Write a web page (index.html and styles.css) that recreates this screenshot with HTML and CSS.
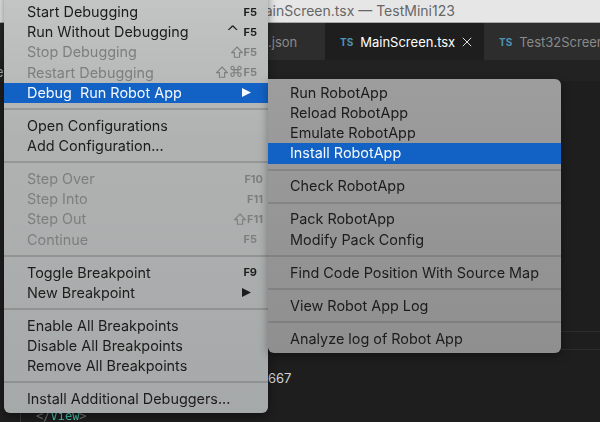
FILE: index.html
```html
<!DOCTYPE html>
<html lang="en">
<head>
<meta charset="utf-8">
<title>Debug menu</title>
<link rel="stylesheet" href="styles.css">
</head>
<body>
<svg class="defs" width="0" height="0"><symbol id="shift" viewBox="0 0 12 12"><path d="M6 1l5.3 5.6H8.6v4.6H3.4V6.6H.7z"/></symbol></svg>
<div class="window">
  <header class="titlebar"><span class="title">MainScreen.tsx — TestMini123</span></header>
  <nav class="tabs">
    <div class="tab tab-json"><span class="tab-name">.json</span></div>
    <div class="tab tab-active"><span class="ts">TS</span><span class="tab-name">MainScreen.tsx</span>
      <svg class="close" viewBox="0 0 10 10" width="10" height="10"><path d="M.8.8l8.4 8.4M9.2.8L.8 9.2"/></svg></div>
    <div class="tab tab-rest"><span class="ts">TS</span><span class="tab-name">Test32Screen</span></div>
  </nav>
  <div class="crumbs"></div>
  <main class="editor">
    <div class="guide"></div>
    <div class="rule rule-a"></div>
    <div class="rule rule-b"></div>
    <div class="code code-edge">e</div>
    <div class="code code-num">667</div>
    <div class="code code-view"><span class="bracket">&lt;/</span><span class="tag">View</span><span class="bracket">&gt;</span></div>
  </main>
</div>

<div class="menu menu-main">
  <div class="item"><span>Start Debugging</span><span class="key">F5</span></div>
  <div class="item"><span>Run Without Debugging</span><span class="key"><span class="mod mod-ctrl">^</span>F5</span></div>
  <div class="item off"><span>Stop Debugging</span><span class="key"><svg class="shift" width="12" height="12"><use href="#shift"/></svg>F5</span></div>
  <div class="item off"><span>Restart Debugging</span><span class="key"><svg class="shift" width="12" height="12"><use href="#shift"/></svg><span class="mod">⌘</span>F5</span></div>
  <div class="item on"><span>Debug&nbsp; Run Robot App</span><svg class="arrow" viewBox="0 0 9 9" width="9" height="9"><path d="M0 0l9 4.5L0 9z"/></svg></div>
  <div class="sep"></div>
  <div class="item"><span>Open Configurations</span></div>
  <div class="item"><span>Add Configuration...</span></div>
  <div class="sep"></div>
  <div class="item off"><span>Step Over</span><span class="key wide">F10</span></div>
  <div class="item off"><span>Step Into</span><span class="key wide">F11</span></div>
  <div class="item off"><span>Step Out</span><span class="key wide"><svg class="shift" width="12" height="12"><use href="#shift"/></svg>F11</span></div>
  <div class="item off"><span>Continue</span><span class="key">F5</span></div>
  <div class="sep"></div>
  <div class="item"><span>Toggle Breakpoint</span><span class="key">F9</span></div>
  <div class="item"><span>New Breakpoint</span><svg class="arrow" viewBox="0 0 9 9" width="9" height="9"><path d="M0 0l9 4.5L0 9z"/></svg></div>
  <div class="sep"></div>
  <div class="item"><span>Enable All Breakpoints</span></div>
  <div class="item"><span>Disable All Breakpoints</span></div>
  <div class="item"><span>Remove All Breakpoints</span></div>
  <div class="sep"></div>
  <div class="item"><span>Install Additional Debuggers...</span></div>
</div>

<div class="menu menu-sub">
  <div class="item"><span>Run RobotApp</span></div>
  <div class="item"><span>Reload RobotApp</span></div>
  <div class="item"><span>Emulate RobotApp</span></div>
  <div class="item on"><span>Install RobotApp</span></div>
  <div class="sep"></div>
  <div class="item"><span>Check RobotApp</span></div>
  <div class="sep"></div>
  <div class="item"><span>Pack RobotApp</span></div>
  <div class="item"><span>Modify Pack Config</span></div>
  <div class="sep"></div>
  <div class="item"><span>Find Code Position With Source Map</span></div>
  <div class="sep"></div>
  <div class="item"><span>View Robot App Log</span></div>
  <div class="sep"></div>
  <div class="item"><span>Analyze log of Robot App</span></div>
</div>
</body>
</html>
```
FILE: styles.css
```css
* { box-sizing: border-box; }
html, body { margin: 0; height: 422px; overflow: hidden; background: #1e1e1e; }
body { position: relative; width: 600px; font-family: Inter, "Liberation Sans", sans-serif; }
.defs { position: absolute; }

.window { display: flex; flex-direction: column; height: 422px; filter: blur(.4px); }
.titlebar { height: 23px; flex: none; background: #e6e6e6; border-bottom: 1px solid #a8a8a8; padding-left: 252px; }
.title { font-size: 14px; line-height: 22px; color: #666; white-space: nowrap; }
.tabs { height: 37px; flex: none; display: flex; background: #252526; padding-left: 268px; }
.tab { display: flex; align-items: center; font-size: 13px; color: #8a8a8a; flex: none; white-space: nowrap; }
.tab-json { width: 57px; background: #2d2d2d; }
.tab-active { width: 159px; padding-left: 15px; background: #1e1e1e; color: #fff; }
.tab-rest { flex: 1; padding-left: 15px; background: #2d2d2d; overflow: hidden; }
.ts { font-size: 10px; font-weight: 700; color: #4f94b8; margin-right: 7px; }
.close { margin-left: 7px; fill: none; stroke: #ddd; stroke-width: 1; }
.crumbs { height: 21px; flex: none; background: #222; }
.editor { flex: 1; position: relative; background: #1e1e1e; }
.guide { position: absolute; left: 20px; top: 298px; bottom: 0; width: 1px; background: #3a3a3a; }
.rule { position: absolute; left: 561px; right: 0; height: 1px; background: #2c2c2c; }
.rule-a { top: 250px; }
.rule-b { top: 268px; }
.code { position: absolute; font-size: 13px; line-height: 16px; white-space: nowrap; }
.code-edge { left: -4px; top: -17px; color: #b0b0b0; }
.code-num { left: 268px; top: 289px; color: #d4d4d4; }
.code-view { left: 36px; top: 327px; font-family: "DejaVu Sans Mono", monospace; font-size: 12px; }
.bracket { color: #777; }
.tag { color: #4ec9b0; }

.menu { position: absolute; display: flex; flex-direction: column; filter: blur(.4px);
  font-size: 14.4px; color: #1c1c1c; }
.menu-main { left: 4px; top: -9px; width: 264px; height: 422px; padding-top: 11px;
  border-radius: 0 0 6px 6px; background: linear-gradient(#c4c5c5, #b0b2b2 35%, #a6a9a9);
  box-shadow: 0 3px 10px rgba(0, 0, 0, .45); }
.menu-sub { left: 268px; top: 79px; width: 293px; height: 274px; padding-top: 3.8px;
  border-radius: 0 6px 6px 6px; background: linear-gradient(#9d9d9d, #8f8f8f);
  box-shadow: 0 3px 10px rgba(0, 0, 0, .35); }
.item { height: 20.2px; flex: none; display: flex; align-items: center; justify-content: space-between;
  padding: 0 11px 1px 23px; white-space: nowrap; }
.menu-sub .item { padding-left: 22px; }
.off { color: #7d7f7f; }
.on { background: #1262c6; color: #f4f8fc; }
.sep { height: 2px; flex: none; margin: 5px 0 5.8px; background: rgba(90, 90, 90, .3); }
.key { display: flex; align-items: center; font-size: 11px; font-weight: 700; }
.wide { margin-right: -6px; }
.mod { font-family: "DejaVu Sans", sans-serif; font-size: 15px; font-weight: 400; }
.mod-ctrl { margin-right: 4px; font-size: 16px; }
.shift { fill: none; stroke: currentColor; stroke-width: 1.1; margin-right: 1px; }
.arrow { fill: currentColor; margin-right: 6px; }
```
